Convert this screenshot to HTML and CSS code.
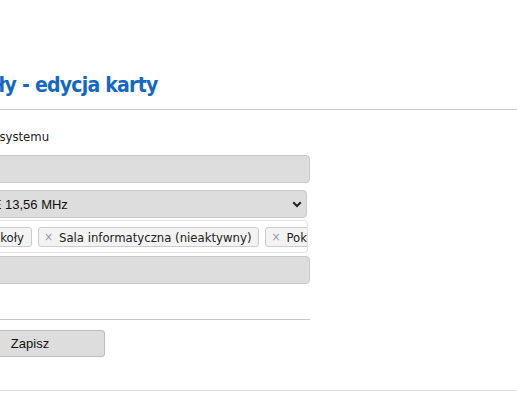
FILE: index.html
```html
<!DOCTYPE html>
<html lang="pl">
<head>
<meta charset="utf-8">
<title>Karty szkoły - edycja karty</title>
<link rel="stylesheet" href="styles.css">
</head>
<body>
<div class="page">
  <div class="content">
    <h1 class="title">Karty szkoły - edycja karty</h1>
    <div class="rule"></div>
    <form class="form">
      <div class="label">Użytkownik systemu</div>
      <input class="field field-user" type="text" value="">
      <div class="select-wrap">
        <select class="field field-select">
          <option>MIFARE 13,56 MHz</option>
        </select>
        <svg class="chevron" width="10" height="7" viewBox="0 0 10 7"><path d="M1.2 1.3 L5 5 L8.8 1.3" fill="none" stroke="#222" stroke-width="2"/></svg>
      </div>
      <div class="tags">
        <span class="tag"><span class="tag-x">×</span>Hol szkoły</span>
        <span class="tag"><span class="tag-x">×</span>Sala informatyczna (nieaktywny)</span>
        <span class="tag"><span class="tag-x">×</span>Pokój nauczycielski</span>
      </div>
      <input class="field field-last" type="text" value="">
      <div class="form-rule"></div>
      <div class="actions">
        <button class="btn" type="button">Zapisz</button>
      </div>
    </form>
  </div>
  <div class="footer-rule"></div>
</div>
</body>
</html>
```
FILE: styles.css
```css
html, body {
  margin: 0;
  padding: 0;
  background: #fff;
  overflow: hidden;
}
body {
  font-family: "DejaVu Sans Condensed", "DejaVu Sans", sans-serif;
  font-stretch: condensed;
  color: #222;
}
.page {
  width: 517px;
  padding-top: 73px;
}
.content {
  margin-left: -50px;
}
.title {
  margin: 0 0 0 -56px;
  font-size: 21px;
  letter-spacing: -0.75px;
  line-height: 24px;
  font-weight: bold;
  color: #1268c3;
  white-space: nowrap;
}
.rule {
  margin-top: 12px;
  border-top: 1px solid #c8c8c8;
  margin-right: -10px;
}
.form {
  width: 360px;
  margin: 0;
}
.label {
  margin: 19px 0 0 -21px;
  font-size: 13px;
  line-height: 16px;
  white-space: nowrap;
}
.field {
  display: block;
  box-sizing: border-box;
  width: 100%;
  height: 28px;
  margin: 10px 0 0 0;
  padding: 0 5px;
  background: #dddddd;
  border: 1px solid #c9c9c9;
  border-radius: 4px;
  font-family: "Liberation Sans", Arial, sans-serif;
  font-size: 13px;
  color: #111;
  outline: none;
}
.select-wrap {
  position: relative;
  margin: 7px 0 0 -1px;
  width: 358px;
}
.field-select {
  margin: 0;
  appearance: none;
  -webkit-appearance: none;
  padding-left: 3px;
}
.chevron {
  position: absolute;
  right: 5px;
  top: 11px;
}
.tags {
  box-sizing: border-box;
  display: flex;
  gap: 6px;
  margin: 2px 0 0 -7px;
  height: 33px;
  width: 365px;
  padding: 6px 0 0 0;
  border: 1px solid #e2e2e2;
  border-radius: 4px;
  background: #fff;
  overflow: hidden;
  white-space: nowrap;
}
.tag {
  box-sizing: border-box;
  flex: none;
  display: flex;
  align-items: center;
  height: 20px;
  padding: 0 7px 0 5px;
  background: #f3f3f3;
  border: 1px solid #cccccc;
  border-radius: 3px;
  font-size: 13px;
  color: #222;
}
.tag-x {
  color: #999;
  font-size: 12px;
  margin-right: 6px;
}
.field-last {
  margin-top: 3px;
}
.form-rule {
  margin-top: 35px;
  border-top: 1px solid #c8c8c8;
}
.actions {
  margin-top: 10px;
  padding-left: 5px;
}
.btn {
  box-sizing: border-box;
  width: 150px;
  height: 27px;
  background: #dddddd;
  border: 1px solid #bdbdbd;
  border-radius: 3px;
  font-family: "Liberation Sans", Arial, sans-serif;
  font-size: 13px;
  color: #111;
  padding: 0;
}
.footer-rule {
  margin-top: 33px;
  border-top: 1px solid #dedede;
}
```
